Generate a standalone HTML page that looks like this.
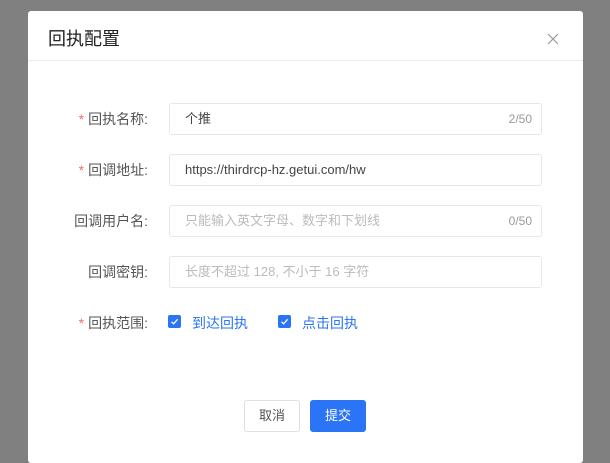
<!DOCTYPE html><html><head><meta charset="utf-8"><style>
*{box-sizing:border-box;margin:0;padding:0}
body{width:610px;height:463px;background:#808080;font-family:"Liberation Sans","Noto Sans CJK SC",sans-serif;position:relative;overflow:hidden}
.dlg{position:absolute;left:28px;top:11px;width:555px;height:452px;background:#fff;border-radius:3px}
.hd{height:50px;border-bottom:1px solid #ebedf0;position:relative}
.hd .t{position:absolute;left:20px;top:14px;font-size:18px;color:#222}
.x{position:absolute;left:519px;top:22px;width:12px;height:12px}
.lab{position:absolute;right:435px;font-size:14px;color:#555;white-space:nowrap}
.lab b{color:#f56c6c;font-weight:normal;margin-right:4px}
.in{position:absolute;left:141px;width:373px;height:32px;border:1px solid #e4e7ed;border-radius:3px;font-size:13px;color:#444;padding-left:15px;line-height:30px}
.in .ph{color:#bbb}
.in .c{position:absolute;right:9px;top:0;font-size:12px;color:#999}
.cb{position:absolute;top:304px;width:13px;height:13px;background:#2a74f5;border-radius:2px}
.cbl{position:absolute;top:302px;font-size:14px;color:#2a74f5}
.btn{position:absolute;top:389px;width:56px;height:32px;border-radius:3px;font-size:13px;text-align:center;line-height:30px}
</style></head><body><div class="dlg">
<div class="hd"><div class="t">回执配置</div>
<svg class="x" viewBox="0 0 12 12"><path d="M1 1L11 11M11 1L1 11" stroke="#999" stroke-width="1.2"/></svg></div>
<div class="lab" style="top:98px"><b>*</b>回执名称:</div>
<div class="in" style="top:92px">个推<span class="c">2/50</span></div>
<div class="lab" style="top:149px"><b>*</b>回调地址:</div>
<div class="in" style="top:143px">https://thirdrcp-hz.getui.com/hw</div>
<div class="lab" style="top:200px">回调用户名:</div>
<div class="in" style="top:194px"><span class="ph">只能输入英文字母、数字和下划线</span><span class="c">0/50</span></div>
<div class="lab" style="top:251px">回调密钥:</div>
<div class="in" style="top:245px"><span class="ph">长度不超过 128, 不小于 16 字符</span></div>
<div class="lab" style="top:302px"><b>*</b>回执范围:</div>
<div class="cb" style="left:140px"><svg viewBox="0 0 13 13" width="13" height="13"><path d="M3.5 6.8L5.6 8.8L9.6 4.3" stroke="#fff" stroke-width="1.3" fill="none"/></svg></div>
<div class="cbl" style="left:164px">到达回执</div>
<div class="cb" style="left:250px"><svg viewBox="0 0 13 13" width="13" height="13"><path d="M3.5 6.8L5.6 8.8L9.6 4.3" stroke="#fff" stroke-width="1.3" fill="none"/></svg></div>
<div class="cbl" style="left:274px">点击回执</div>
<div class="btn" style="left:216px;border:1px solid #dcdfe6;color:#555">取消</div>
<div class="btn" style="left:282px;background:#2a74f5;color:#fff;border:1px solid #2a74f5">提交</div>
</div></body></html>
